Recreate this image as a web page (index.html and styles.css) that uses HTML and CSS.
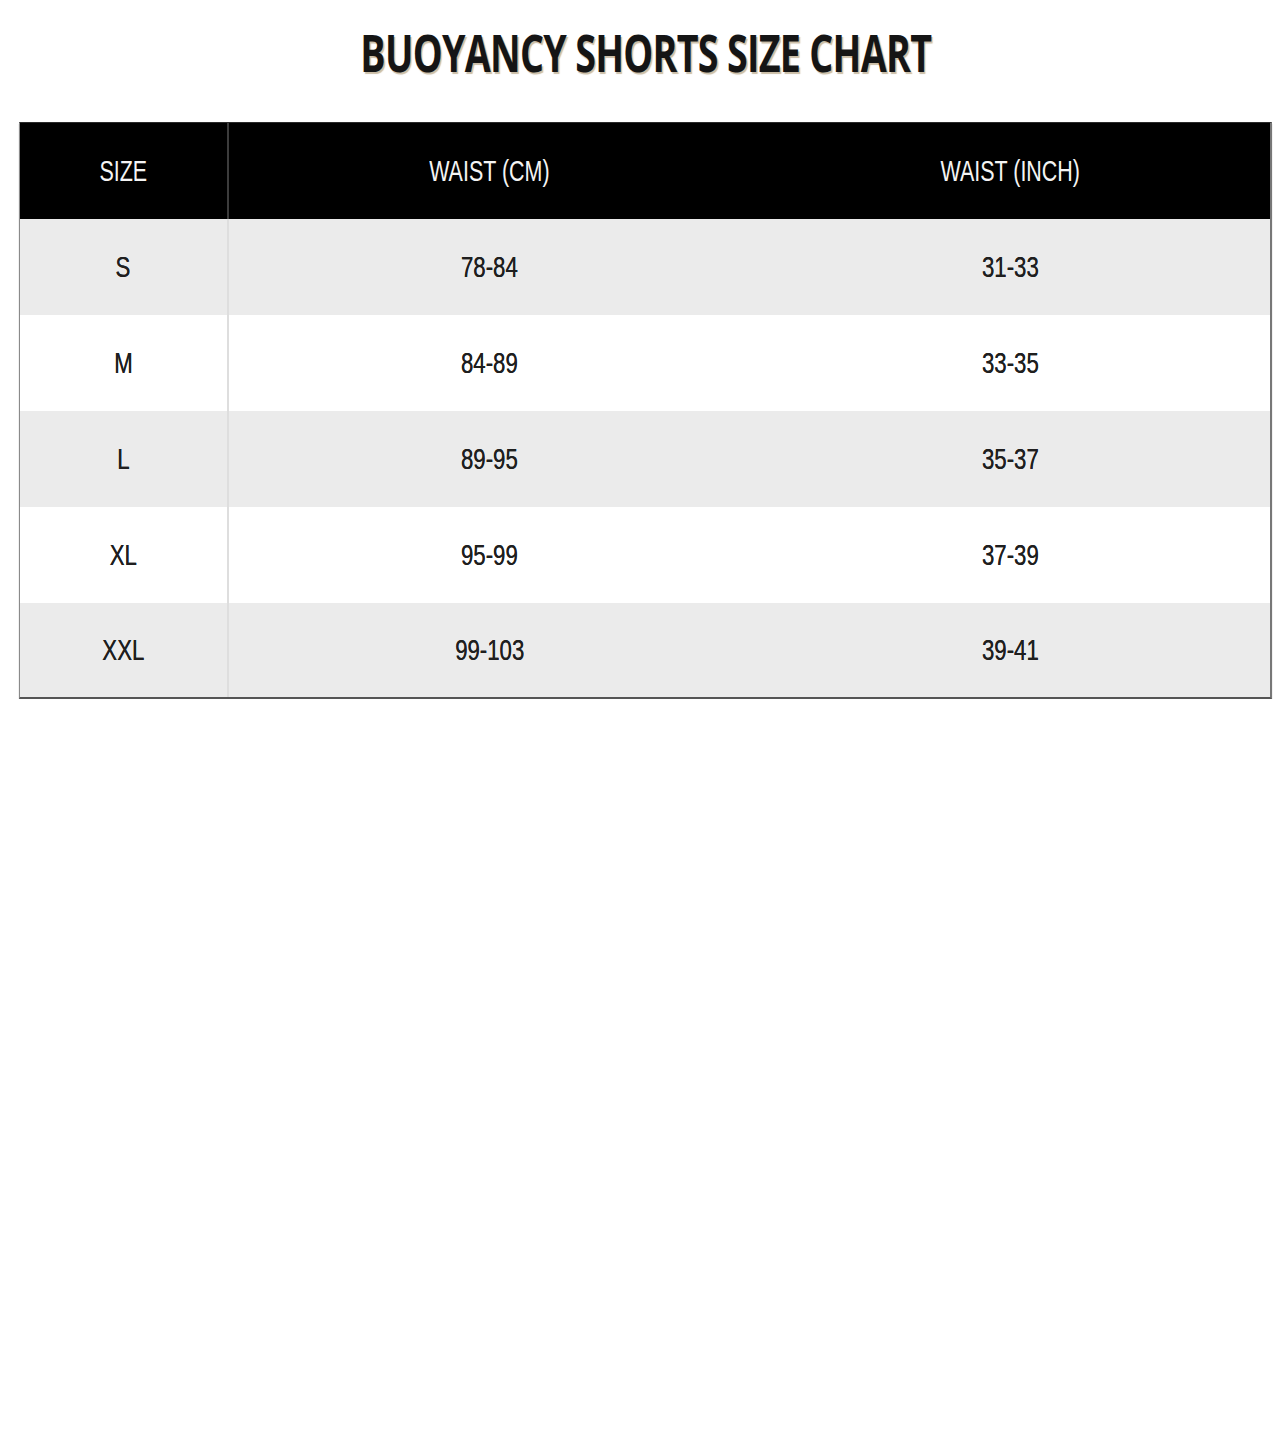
FILE: index.html
```html
<!DOCTYPE html>
<html>
<head>
<meta charset="utf-8">
<link rel="stylesheet" href="styles.css">
</head>
<body>
<div class="page">
  <h1 class="title"><span class="sq">BUOYANCY SHORTS SIZE CHART</span></h1>
  <div class="chart">
    <div class="row head">
      <div class="cell c1"><span class="sq">SIZE</span></div>
      <div class="cell"><span class="sq">WAIST (CM)</span></div>
      <div class="cell"><span class="sq">WAIST (INCH)</span></div>
    </div>
    <div class="row odd">
      <div class="cell c1"><span class="sq">S</span></div>
      <div class="cell"><span class="sq">78-84</span></div>
      <div class="cell"><span class="sq">31-33</span></div>
    </div>
    <div class="row">
      <div class="cell c1"><span class="sq">M</span></div>
      <div class="cell"><span class="sq">84-89</span></div>
      <div class="cell"><span class="sq">33-35</span></div>
    </div>
    <div class="row odd">
      <div class="cell c1"><span class="sq">L</span></div>
      <div class="cell"><span class="sq">89-95</span></div>
      <div class="cell"><span class="sq">35-37</span></div>
    </div>
    <div class="row">
      <div class="cell c1"><span class="sq">XL</span></div>
      <div class="cell"><span class="sq">95-99</span></div>
      <div class="cell"><span class="sq">37-39</span></div>
    </div>
    <div class="row odd last">
      <div class="cell c1"><span class="sq">XXL</span></div>
      <div class="cell"><span class="sq">99-103</span></div>
      <div class="cell"><span class="sq">39-41</span></div>
    </div>
  </div>
</div>
</body>
</html>
```

FILE: styles.css
```css
html, body {
  margin: 0;
  padding: 0;
  background: #fff;
}
.page {
  width: 1280px;
  padding-top: 22px;
}
.title {
  margin: 0;
  height: 100px;
  padding-left: 11px;
  text-align: center;
  font-family: "Open Sans", "Liberation Sans", sans-serif;
  font-weight: 700;
  font-size: 52px;
  line-height: 60px;
  color: #151515;
  text-shadow: 2px 2px 1px rgba(140, 110, 60, 0.45);
}
.title .sq {
  display: inline-block;
  transform: scaleX(0.725);
  letter-spacing: -1px;
  white-space: nowrap;
}
.chart {
  margin-left: 19px;
  width: 1253px;
  border-left: 1px solid #8a8a8a;
  border-right: 2px solid #777;
  border-top: 1px solid #2a2a2a;
  border-bottom: 2px solid #555;
  box-shadow: 0 2px 1px #aaa;
  box-sizing: border-box;
}
.row {
  display: grid;
  grid-template-columns: 209px 521px 1fr;
  height: 96px;
  background: #fff;
}
.row.odd {
  background: #ebebeb;
}
.row.head {
  background: #000;
  height: 96px;
}
.row.last {
  height: 94px;
}
.cell {
  display: flex;
  align-items: center;
  justify-content: center;
  font-family: "Liberation Sans", Arial, sans-serif;
  font-size: 30px;
  color: #1f1f1f;
  text-shadow: 0 0 0.6px #1f1f1f;
}
.cell.c1 {
  border-right: 2px solid #dedede;
}
.head .cell {
  color: #f4f4f4;
  font-size: 29px;
  text-shadow: none;
}
.head .cell.c1 {
  border-right: 2px solid #3c3c3c;
}
.cell .sq {
  display: inline-block;
  transform: scaleX(0.74);
  white-space: nowrap;
}
```
